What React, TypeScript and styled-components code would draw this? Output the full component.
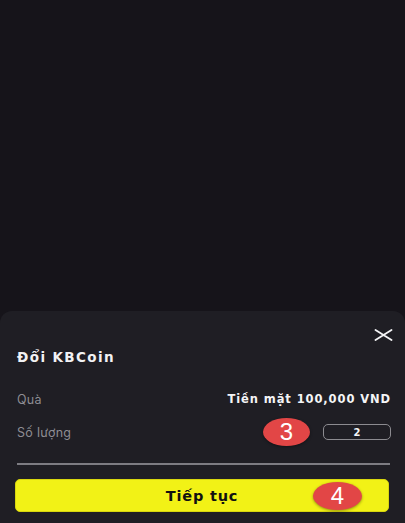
import React from "react";
import styled, { createGlobalStyle } from "styled-components";

const Global = createGlobalStyle`
  html, body { margin: 0; padding: 0; background: #16141a; }
  body { font-family: "Inter", "Noto Sans", sans-serif; }
  * { box-sizing: border-box; }
`;

const Screen = styled.div`
  width: 405px;
  height: 523px;
  display: flex;
  flex-direction: column;
  background: #16141a;
  overflow: hidden;
`;

const Backdrop = styled.div`
  flex: 1;
`;

const Sheet = styled.div`
  height: 212px;
  background: #1f1e24;
  border-radius: 12px 12px 0 0;
  padding: 12px 15px 11px 15px;
  display: flex;
  flex-direction: column;
`;

const CloseRow = styled.div`
  height: 24px;
  display: flex;
  justify-content: flex-end;
  align-items: center;
`;

const CloseButton = styled.button`
  background: none;
  border: none;
  padding: 0;
  margin-right: -3px;
  width: 20px;
  height: 14px;
  display: flex;
  align-items: center;
  justify-content: center;
  cursor: pointer;
`;

const Title = styled.div`
  height: 20px;
  line-height: 20px;
  margin-left: 2px;
  color: #f2f2f4;
  font-family: "DejaVu Sans", "Noto Sans", sans-serif;
  font-size: 13.5px;
  font-weight: 700;
  letter-spacing: 1.4px;
`;

const Row = styled.div<{ $top: number }>`
  position: relative;
  margin-top: ${(p) => p.$top}px;
  height: 20px;
  display: flex;
  align-items: center;
  justify-content: space-between;
  padding-left: 2px;
`;

const Label = styled.span`
  color: #8e8d93;
  font-size: 12.5px;
  letter-spacing: 0.3px;
`;

const Value = styled.span`
  color: #f4f4f6;
  font-family: "DejaVu Sans", "Noto Sans", sans-serif;
  font-size: 11.5px;
  font-weight: 700;
  letter-spacing: 0.9px;
  margin-right: -1px;
`;

const QtyBox = styled.div`
  width: 68px;
  height: 16px;
  margin-right: -1px;
  border: 1.5px solid #8c8b90;
  border-radius: 5px;
  display: flex;
  align-items: center;
  justify-content: center;
  color: #f4f4f6;
  font-family: "DejaVu Sans", "Noto Sans", sans-serif;
  font-size: 10px;
  font-weight: 700;
`;

const Divider = styled.div`
  margin-top: 21px;
  height: 2px;
  margin-left: 2px;
  background: #7d7c82;
`;

const ActionButton = styled.button`
  position: relative;
  margin-top: 14px;
  margin-right: 1px;
  height: 33px;
  border: 1px solid #d8d60e;
  border-radius: 5px;
  background: #f2f216;
  color: #111;
  font-family: "DejaVu Sans", "Noto Sans", sans-serif;
  font-size: 14.5px;
  font-weight: 700;
  letter-spacing: 0.8px;
  display: flex;
  align-items: center;
  justify-content: center;
  padding: 0;
`;

const Badge = styled.span<{ $left: number; $w: number }>`
  position: absolute;
  left: ${(p) => p.$left}px;
  top: 50%;
  transform: translateY(-50%);
  width: ${(p) => p.$w}px;
  height: 28px;
  border-radius: 50%;
  background: #e24646;
  color: #fff;
  font-family: "Liberation Sans", "Noto Sans", sans-serif;
  font-size: 24px;
  font-weight: 400;
  letter-spacing: 0;
  display: flex;
  align-items: center;
  justify-content: center;
  box-shadow: 0 1px 3px rgba(0, 0, 0, 0.4);
`;

export default function App() {
  return (
    <>
      <Global />
      <Screen>
        <Backdrop />
        <Sheet>
          <CloseRow>
            <CloseButton aria-label="Đóng">
              <svg width="19" height="12" viewBox="0 0 19 12">
                <path d="M1.5 1 L17.5 11 M17.5 1 L1.5 11" stroke="#f4f4f6" strokeWidth="1.8" strokeLinecap="round" />
              </svg>
            </CloseButton>
          </CloseRow>
          <Title>Đổi KBCoin</Title>
          <Row $top={22}>
            <Label>Quà</Label>
            <Value>Tiền mặt 100,000 VND</Value>
          </Row>
          <Row $top={13}>
            <Label>Số lượng</Label>
            <Badge $left={248} $w={47}>3</Badge>
            <QtyBox>2</QtyBox>
          </Row>
          <Divider />
          <ActionButton>
            Tiếp tục
            <Badge $left={297} $w={49}>4</Badge>
          </ActionButton>
        </Sheet>
      </Screen>
    </>
  );
}
